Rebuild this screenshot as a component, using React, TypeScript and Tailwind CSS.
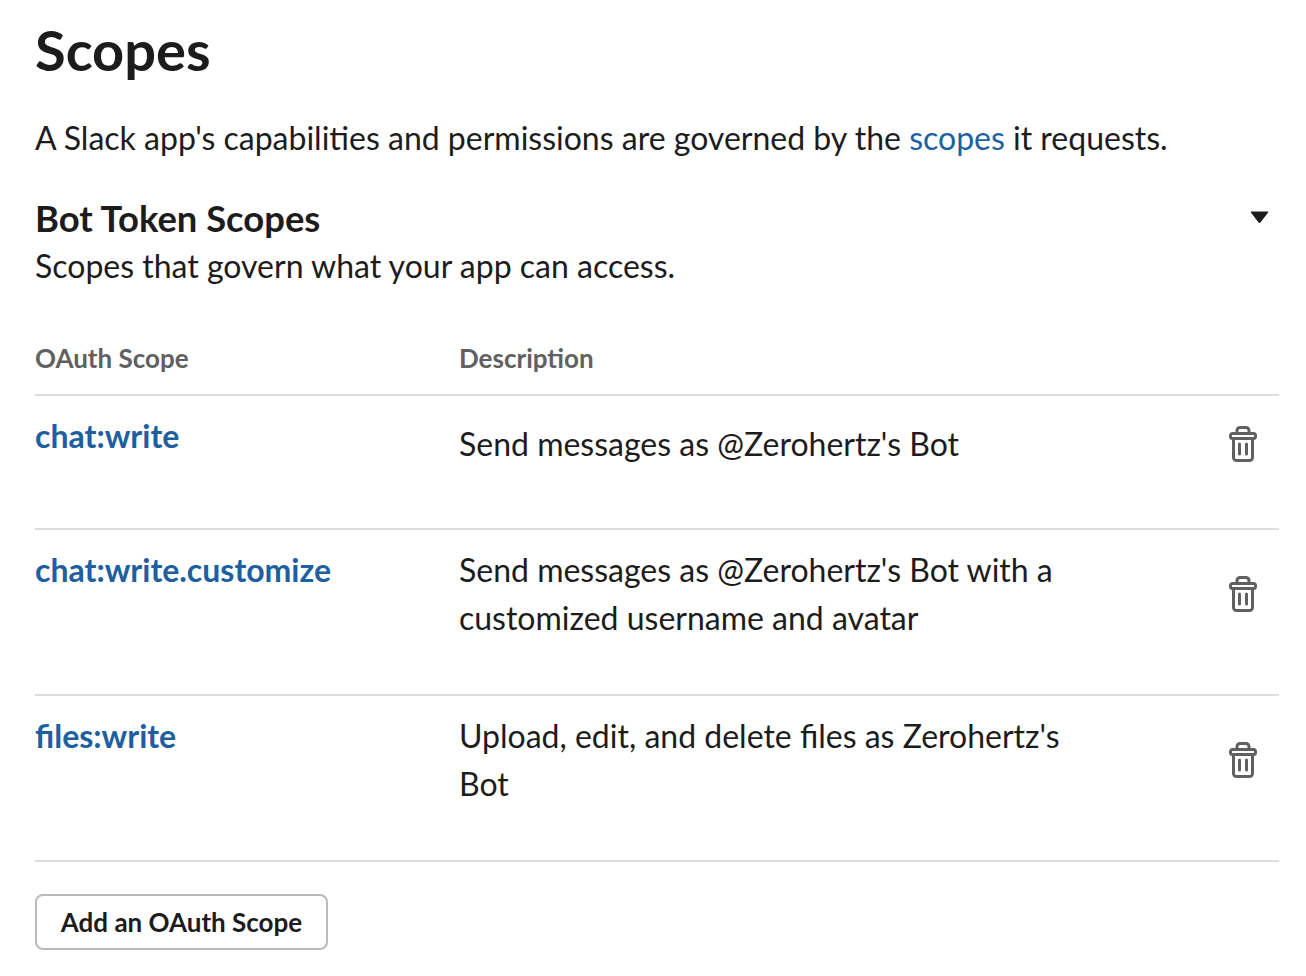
const rows = [
    { scope: "chat:write", lines: ["Send messages as @Zerohertz's Bot"] },
    { scope: "chat:write.customize", lines: ["Send messages as @Zerohertz's Bot with a", "customized username and avatar"] },
    { scope: "files:write", lines: ["Upload, edit, and delete files as Zerohertz's", "Bot"] },
];

const TrashIcon = () => (
    <svg width="30" height="38" viewBox="0 -1 30 38" fill="none" stroke="#616061" strokeWidth="3" strokeLinejoin="round" strokeLinecap="round">
        <path d="M9 7V4.500a3 3 0 0 1 3-3h6a3 3 0 0 1 3 3V7" />
        <path d="M4.500 7.500h21a2 2 0 0 1 2 2v1a2 2 0 0 1-2 2h-21a2 2 0 0 1-2-2v-1a2 2 0 0 1 2-2z" />
        <path d="M5.500 12.500V31.500a3 3 0 0 0 3 3h13a3 3 0 0 0 3-3V12.500" />
        <path d="M11.500 18v10M18.500 18v10" />
    </svg>
);

const App = () => {
    return (
        <div className="min-h-[976px] bg-white pl-[35px] pr-[27px] text-[#1d1c1d] font-['Lato','Liberation_Sans',sans-serif]">
            <h1 className="pt-[14px] text-[56px] leading-[72px] font-bold">Scopes</h1>

            <p className="mt-[28px] text-[32px] leading-[48px]">
                A Slack app's capabilities and permissions are governed by the <span className="text-[#1e5f9f]">scopes</span> it requests.
            </p>

            {/* Bot token section */}
            <div className="mt-[32px] flex items-start justify-between">
                <div>
                    <h2 className="text-[36.400px] leading-[48px] font-bold">Bot Token Scopes</h2>
                    <p className="text-[32px] leading-[48px]">Scopes that govern what your app can access.</p>
                </div>
                <svg className="mr-[10px] mt-[17px]" width="19" height="13" viewBox="0 0 19 13">
                    <path d="M1 1h17L9.500 12z" fill="#1d1c1d" stroke="#1d1c1d" strokeLinejoin="round" />
                </svg>
            </div>

            {/* Table header */}
            <div className="mt-[50px] flex border-b-2 border-[#dddddd] pb-[18px] text-[26px] leading-[36px] font-bold text-[#616061]">
                <div className="w-[424px]">OAuth Scope</div>
                <div>Description</div>
            </div>

            {rows.map((row) => (
                <div key={row.scope} className="flex border-b-2 border-[#dddddd] pt-[16px] pb-[52px]">
                    <div className="w-[424px] text-[32px] leading-[48px] font-bold text-[#1e5f9f]">{row.scope}</div>
                    <div className="flex min-h-[64px] flex-1 items-center">
                        <div className="flex-1 text-[32px] leading-[48px]">
                            {row.lines.map((line) => (
                                <div key={line}>{line}</div>
                            ))}
                        </div>
                        <div className="mr-[21px]">
                            <TrashIcon />
                        </div>
                    </div>
                </div>
            ))}

            <button className="mt-[32px] h-[56px] w-[293px] rounded-[8px] border-2 border-[#bbbabb] bg-white text-[26px] font-bold text-[#1d1c1d]">
                Add an OAuth Scope
            </button>
        </div>
    );
};

export default App;
